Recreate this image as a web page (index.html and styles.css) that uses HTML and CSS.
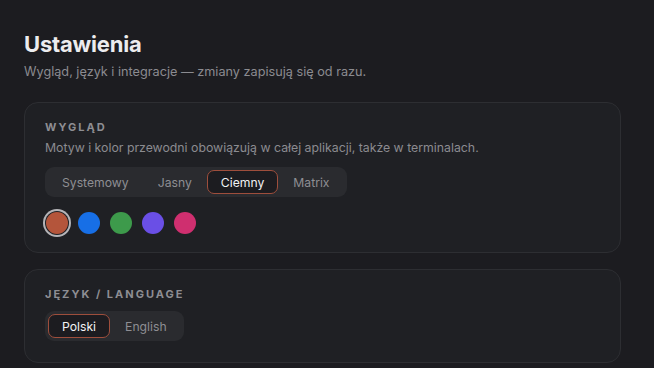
FILE: index.html
```html
<!DOCTYPE html>
<html lang="pl">
<head>
    <meta charset="UTF-8">
    <meta name="viewport" content="width=device-width, initial-scale=1.0">
    <title>Ustawienia</title>
    <link rel="stylesheet" href="styles.css">
</head>
<body>

    <h1>Ustawienia</h1>
    <p class="lead">Wygląd, język i integracje — zmiany zapisują się od razu.</p>

    <section class="card">
        <h2>Wygląd</h2>
        <p class="desc">Motyw i kolor przewodni obowiązują w całej aplikacji, także w terminalach.</p>
        <div class="segmented">
            <button class="seg">Systemowy</button>
            <button class="seg">Jasny</button>
            <button class="seg active">Ciemny</button>
            <button class="seg">Matrix</button>
        </div>
        <div class="swatches">
            <span class="swatch rust selected"></span>
            <span class="swatch blue"></span>
            <span class="swatch green"></span>
            <span class="swatch violet"></span>
            <span class="swatch pink"></span>
        </div>
    </section>

    <section class="card card-lang">
        <h2>Język / Language</h2>
        <div class="segmented">
            <button class="seg active">Polski</button>
            <button class="seg">English</button>
        </div>
    </section>

</body>
</html>
```

FILE: styles.css
```css
* {
    padding: 0;
    margin: 0;
    box-sizing: border-box;
}

html {
    background-color: #1c1c20;
    color: #ececee;
    font-family: Inter, 'Noto Sans', sans-serif;
}

body {
    padding: 30px 33px 24px 24px;
}

h1 {
    font-size: 22px;
    font-weight: 700;
    line-height: 28px;
    letter-spacing: -0.2px;
}

.lead {
    font-size: 12.7px;
    line-height: 18px;
    color: #8b8b90;
    margin-top: 5px;
    margin-bottom: 21px;
}

.card {
    background-color: #1f2024;
    border: 1px solid #2d2e32;
    border-radius: 14px;
    padding: 17px 20px 18px;
    margin-bottom: 16px;
}

.card-lang {
    padding-bottom: 21px;
}

.card h2 {
    font-size: 11px;
    font-weight: 700;
    letter-spacing: 2px;
    text-transform: uppercase;
    color: #8e8e93;
    line-height: 14px;
}

.desc {
    font-size: 12.3px;
    line-height: 18px;
    color: #8b8b90;
    margin-top: 5px;
}

.segmented {
    display: inline-flex;
    gap: 1px;
    padding: 3px;
    margin-top: 10px;
    background-color: #2a2b2f;
    border-radius: 9px;
}

.seg {
    font-family: inherit;
    font-size: 12.2px;
    height: 24px;
    padding: 0 13px;
    border: 1px solid transparent;
    border-radius: 7px;
    background: none;
    color: #8e8e93;
}

.seg.active {
    background-color: #1c1c20;
    border-color: #9e4e3c;
    color: #f2f2f4;
}

.swatches {
    display: flex;
    gap: 10px;
    margin-top: 15px;
    padding-left: 1px;
}

.swatch {
    width: 22px;
    height: 22px;
    border-radius: 50%;
}

.swatch.selected {
    box-shadow: 0 0 0 1px #1f2024, 0 0 0 3px #b4b4b8;
}

.rust { background-color: #b4553b; }
.blue { background-color: #176fe6; }
.green { background-color: #3d9a4b; }
.violet { background-color: #6a4fe6; }
.pink { background-color: #cf2f6f; }
```
